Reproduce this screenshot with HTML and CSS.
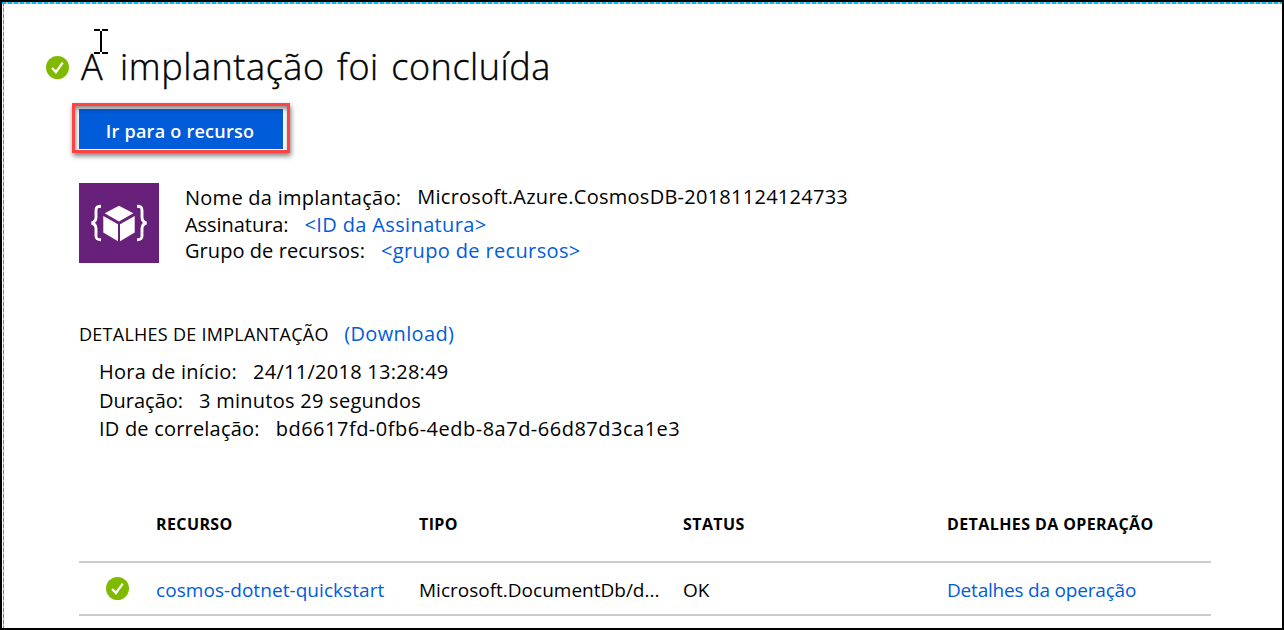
FILE: index.html
```html
<!DOCTYPE html>
<html lang="pt-BR">
<head>
<meta charset="utf-8">
<title>A implantação foi concluída</title>
<link rel="stylesheet" href="styles.css">
</head>
<body>
<main class="frame">
  <header class="heading">
    <svg class="check" viewBox="0 0 24 24"><circle cx="12" cy="12" r="12" fill="#7fba00"/><path d="M6.400 12.600l3.900 4.200 7.200-9.900" fill="none" stroke="#fff" stroke-width="2.400"/></svg>
    <h1 class="title"><span class="lead">A</span> implantação foi concluída</h1>
    <svg class="cursor" viewBox="0 0 14 25"><path d="M0 1h6M8 1h6M7 2v21M0 24h6M8 24h6" fill="none" stroke="#000" stroke-width="2"/></svg>
  </header>
  <div class="callout"><button class="primary">Ir para o recurso</button></div>
  <section class="summary">
    <svg class="logo" viewBox="0 0 80 80"><rect width="80" height="80" fill="#68217a"/><path d="M40 22.700l14.300 7.600L40 38.600l-14.300-8.300zM24.300 32.900L39 41.200v17L24.300 49.500zM55.700 32.900L41 41.200v17l14.700-8.700z" fill="#fff"/><path d="M22 23.300c-4 0-5 1-5 4v7c0 3-1 4.700-4.300 5.700 3.300 1 4.300 2.700 4.300 5.700v7c0 3 1 4 5 4M58 23.300c4 0 5 1 5 4v7c0 3 1 4.700 4.300 5.700-3.300 1-4.300 2.700-4.300 5.700v7c0 3-1 4-5 4" fill="none" stroke="#fff" stroke-width="2.900" stroke-linejoin="bevel"/></svg>
    <dl class="facts">
      <div class="fact"><dt class="sp-m">Nome da implantação:</dt><dd class="sp-m raised">Microsoft.Azure.CosmosDB-20181124124733</dd></div>
      <div class="fact"><dt class="sp-n">Assinatura:</dt><dd class="sp-l link">&lt;ID da Assinatura&gt;</dd></div>
      <div class="fact"><dt class="sp-s">Grupo de recursos:</dt><dd class="sp-l link">&lt;grupo de recursos&gt;</dd></div>
    </dl>
  </section>
  <section class="details">
    <div class="details-head"><h2 class="sp-m">DETALHES DE IMPLANTAÇÃO</h2><a class="sp-l link">(Download)</a></div>
    <dl class="times">
      <div class="fact"><dt class="sp-m">Hora de início:</dt><dd class="sp-m">24/11/2018 13:28:49</dd></div>
      <div class="fact"><dt>Duração:</dt><dd class="sp-m">3 minutos 29 segundos</dd></div>
      <div class="fact"><dt class="sp-id">ID de correlação:</dt><dd class="sp-xl">bd6617fd-0fb6-4edb-8a7d-66d87d3ca1e3</dd></div>
    </dl>
  </section>
  <section class="table">
    <div class="row head"><span></span><span>RECURSO</span><span>TIPO</span><span>STATUS</span><span>DETALHES DA OPERAÇÃO</span></div>
    <div class="row item"><svg class="check" viewBox="0 0 24 24"><circle cx="12" cy="12" r="12" fill="#7fba00"/><path d="M6.400 12.600l3.900 4.200 7.200-9.900" fill="none" stroke="#fff" stroke-width="2.400"/></svg><a class="sp-s link">cosmos-dotnet-quickstart</a><span>Microsoft.DocumentDb/d...</span><span>OK</span><a class="sp-t link">Detalhes da operação</a></div>
  </section>
</main>
</body>
</html>
```
FILE: styles.css
```css
* { box-sizing: border-box; margin: 0; padding: 0; }
body { width: 1284px; height: 630px; overflow: hidden; font: 20px/28px "Open Sans", "Noto Sans", sans-serif; color: #000; background: #fff; }
.frame { position: relative; width: 1284px; height: 630px; border: 2px solid #000; background: repeating-linear-gradient(90deg, #00bff7 0 4px, #c8bfb8 4px 6px) 0 0 / 100% 2px no-repeat padding-box, repeating-linear-gradient(180deg, #1aa5d8 0 4px, #c8c4c0 4px 6px) 1px 0 / 1px 100% no-repeat padding-box, #fff; }
.heading { position: relative; display: flex; align-items: center; gap: 12px; height: 50px; margin: 40px 0 0 44px; }
.check { display: block; width: 23px; height: 23px; }
.title { font-size: 36px; line-height: 50px; font-weight: 300; letter-spacing: .57px; word-spacing: 2.500px; white-space: nowrap; -webkit-text-stroke: .4px #000; }
.lead { margin-right: 4.500px; }
.cursor { position: absolute; left: 48px; top: -13px; width: 14px; height: 25px; }
.callout { display: flex; width: 218px; height: 50px; margin: 11px 0 0 70px; padding: 3px 4px 1px; border: 3px solid #ff4343; box-shadow: 1px 3px 5px rgba(0,0,0,.5), inset 1px 3px 4px rgba(0,0,0,.45); }
.primary { flex: 1; padding: 4px 2px 0 0; border: 0; background: linear-gradient(#0050bd, #015cda 5px); color: #fff; font: 600 18px/36px "Open Sans", sans-serif; letter-spacing: .25px; white-space: nowrap; }
.summary { display: flex; gap: 26px; margin: 30px 0 0 77px; }
.logo { width: 80px; height: 80px; }
.facts { padding-top: 1px; }
.fact { display: flex; gap: 16px; height: 26.500px; white-space: nowrap; }
.raised { margin-top: -1px; }
.link { color: #015cda; }
.sp-t { letter-spacing: -.2px; }
.sp-n { letter-spacing: -.05px; }
.sp-s { letter-spacing: .06px; }
.sp-id { letter-spacing: .2px; }
.sp-m { letter-spacing: .26px; }
.sp-l { letter-spacing: .36px; }
.sp-xl { letter-spacing: .5px; }
.details { margin: 56px 0 0 77px; }
.details-head { display: flex; gap: 15.500px; align-items: baseline; }
.details-head h2 { font-size: 18px; font-weight: 400; }
.times { margin: 10px 0 0 20px; }
.times .fact { height: 28px; }
.times .fact:first-child { height: 29px; }
.table { width: 1132px; margin: 51px 0 0 77px; }
.row { display: grid; grid-template-columns: 77px 263px 264px 264px 1fr; align-items: center; border-bottom: 2px solid #ccc; white-space: nowrap; }
.head { height: 69px; padding-bottom: 7px; font-size: 16px; font-weight: 700; letter-spacing: .4px; }
.item { height: 53px; font-size: 19px; }
.item > a, .item > span { padding-top: 4px; }
.item .check { margin-left: 27px; }
```
